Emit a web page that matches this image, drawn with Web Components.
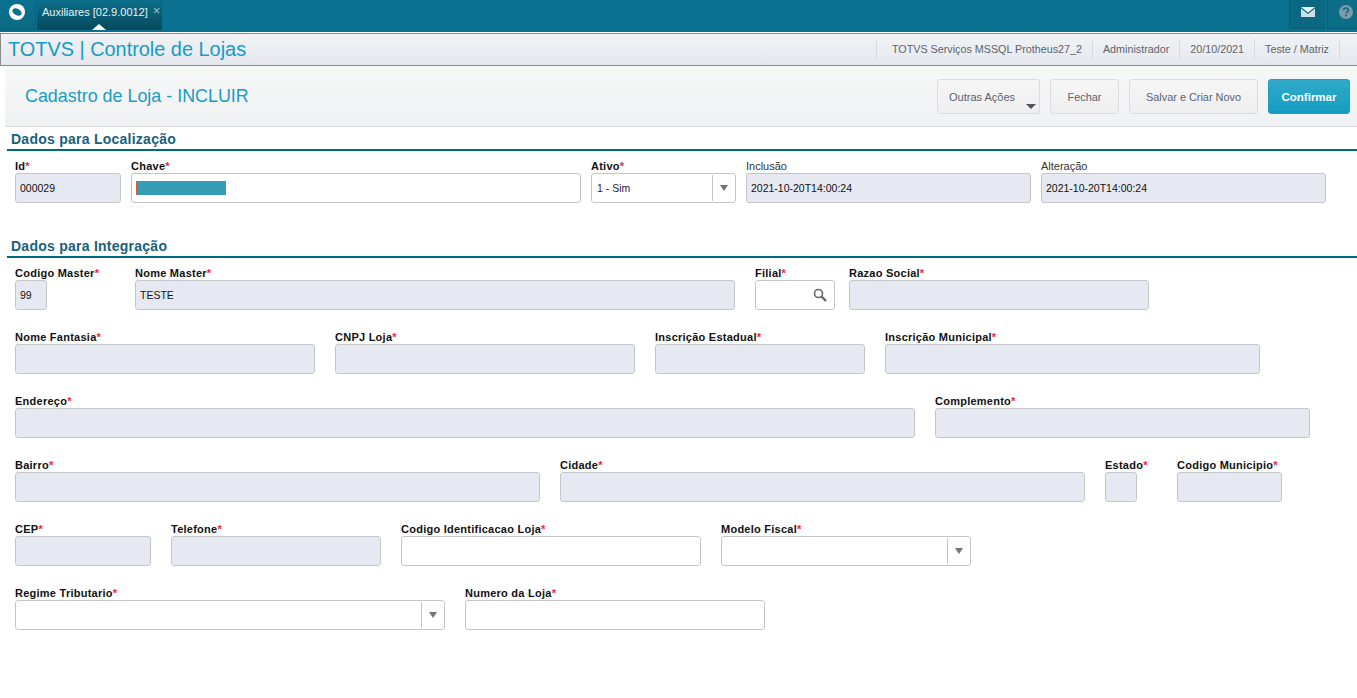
<!DOCTYPE html>
<html lang="pt-BR">
<head>
<meta charset="utf-8">
<title>TOTVS | Controle de Lojas</title>
<style>
  html, body { margin: 0; height: 100%; background: #fff; overflow: hidden; }
  body { font-family: "Liberation Sans", Arial, sans-serif; }
</style>
</head>
<body>
<app-topbar label="Auxiliares [02.9.0012]"></app-topbar>
<app-titlebar title="TOTVS | Controle de Lojas">
  <span>TOTVS Serviços MSSQL Protheus27_2</span>
  <span>Administrador</span>
  <span>20/10/2021</span>
  <span>Teste / Matriz</span>
</app-titlebar>
<page-header title="Cadastro de Loja - INCLUIR">
  <action-button width="103" menu>Outras Ações</action-button>
  <action-button width="69">Fechar</action-button>
  <action-button width="129">Salvar e Criar Novo</action-button>
  <action-button width="82" primary>Confirmar</action-button>
</page-header>

<form-section title="Dados para Localização" top="4">
  <form-row gap="10">
    <form-field label="Id" required readonly width="106" value="000029"></form-field>
    <form-field label="Chave" required width="450" masked></form-field>
    <form-field label="Ativo" required type="select" width="145" value="1 - Sim"></form-field>
    <form-field label="Inclusão" plain readonly width="285" value="2021-10-20T14:00:24"></form-field>
    <form-field label="Alteração" plain readonly width="285" value="2021-10-20T14:00:24"></form-field>
  </form-row>
</form-section>

<form-section title="Dados para Integração" top="35">
  <form-row gap="10">
    <form-field label="Codigo Master" required readonly width="110" input-width="32" value="99"></form-field>
    <form-field label="Nome Master" required readonly width="610" input-width="600" value="TESTE"></form-field>
    <form-field label="Filial" required type="search" width="84" input-width="80"></form-field>
    <form-field label="Razao Social" required readonly width="300"></form-field>
  </form-row>
  <form-row>
    <form-field label="Nome Fantasia" required readonly width="300"></form-field>
    <form-field label="CNPJ Loja" required readonly width="300"></form-field>
    <form-field label="Inscrição Estadual" required readonly width="210"></form-field>
    <form-field label="Inscrição Municipal" required readonly width="375"></form-field>
  </form-row>
  <form-row>
    <form-field label="Endereço" required readonly width="900"></form-field>
    <form-field label="Complemento" required readonly width="375"></form-field>
  </form-row>
  <form-row>
    <form-field label="Bairro" required readonly width="525"></form-field>
    <form-field label="Cidade" required readonly width="525"></form-field>
    <form-field label="Estado" required readonly width="52" input-width="32"></form-field>
    <form-field label="Codigo Municipio" required readonly width="105"></form-field>
  </form-row>
  <form-row>
    <form-field label="CEP" required readonly width="136"></form-field>
    <form-field label="Telefone" required readonly width="210"></form-field>
    <form-field label="Codigo Identificacao Loja" required width="300"></form-field>
    <form-field label="Modelo Fiscal" required type="select" width="250"></form-field>
  </form-row>
  <form-row>
    <form-field label="Regime Tributario" required type="select" width="430"></form-field>
    <form-field label="Numero da Loja" required width="300"></form-field>
  </form-row>
</form-section>

<script>
class AppTopbar extends HTMLElement {
  constructor() {
    super();
    this.attachShadow({ mode: 'open' });
  }
  connectedCallback() {
    this.shadowRoot.innerHTML = `
      <style>
        :host { display: flex; height: 32px; background: #0b7190; color: #fff; font-size: 11px; }
        .logo { width: 35px; height: 29px; display: flex; align-items: center; justify-content: center;
          background: linear-gradient(#0b7190, #0a6a82); border-right: 1px solid #0a5f78; border-bottom: 1px solid #0a5f78; }
        .logo svg { margin: -5px 1px 0 0; }
        .tab { margin-left: 1px; width: 125px; height: 30px; box-sizing: border-box; padding: 6px 0 0 5px;
          background: linear-gradient(#0b6e8b, #07495c); position: relative; white-space: nowrap; color: #e9f3f6; }
        .tab i { font-style: normal; color: #a9c5cf; font-size: 13px; line-height: 10px; margin-left: 2px; position: relative; top: -1px; }
        .tab::after { content: ''; position: absolute; left: 55px; bottom: 0; border: 7px solid transparent;
          border-top: 0; border-bottom: 6px solid #fff; }
        .right { margin-left: auto; display: flex; }
        .cell { height: 29px; box-sizing: border-box; padding-bottom: 5px; display: flex; align-items: center; justify-content: center;
          background: #0a6882; border-left: 1px solid #0a5f78; border-bottom: 1px solid #0a5f78; }
        .mail { width: 36px; margin-right: 2px; }
        .help { width: 30px; padding-left: 6px; background: #0b6d88; }
      </style>
      <div class="logo">
        <svg width="16" height="16" viewBox="0 0 16 16" aria-hidden="true">
          <circle cx="8" cy="8" r="8" fill="#fff"/>
          <ellipse cx="8" cy="8" rx="5" ry="3.200" transform="rotate(28 8 8)" fill="#0b7088"/>
        </svg>
      </div>
      <div class="tab">${this.getAttribute('label')} <i>×</i></div>
      <div class="right">
        <div class="cell mail">
          <svg width="14" height="10" viewBox="0 0 14 10" aria-hidden="true">
            <path d="M0 0H14L7 5.400Z" fill="#eef5f8"/>
            <path d="M0 1.600V10H14V1.600L7 7Z" fill="#cfe0e8"/>
          </svg>
        </div>
        <div class="cell help">
          <svg width="14" height="14" viewBox="0 0 14 14" aria-hidden="true">
            <circle cx="7" cy="7" r="7" fill="#7d9aa6"/>
            <path d="M4.600 5.300C4.700 3.800 5.700 3 7 3c1.400 0 2.400.8 2.400 2 0 1-.6 1.500-1.200 1.900-.6.4-.8.700-.8 1.400" fill="none" stroke="#0b6d88" stroke-width="1.700"/>
            <rect x="6.200" y="9.400" width="1.800" height="1.800" fill="#0b6d88"/>
          </svg>
        </div>
      </div>
    `;
  }
}

class AppTitlebar extends HTMLElement {
  constructor() {
    super();
    this.attachShadow({ mode: 'open' });
  }
  connectedCallback() {
    this.shadowRoot.innerHTML = `
      <style>
        :host { display: flex; align-items: center; box-sizing: border-box; height: 34px; border-top: 1px solid #fff;
          background: linear-gradient(#f1f3f6 0, #e4e7ec 100%);
          box-shadow: inset 0 1px 0 #8b8b8b, inset 0 -1px 0 #8b8b8b, inset 1px 0 0 #8b8b8b; padding: 1px 0 2px 8px; }
        h1 { margin: 0; font-weight: normal; font-size: 19.900px; color: #159cc6; white-space: nowrap; }
        .info { margin-left: auto; margin-right: 17px; display: flex; height: 20px; align-items: center;
          font-size: 10.750px; color: #5d6470; border-left: 1px solid #d6d9de; padding-left: 5px; }
        ::slotted(span) { padding: 0 10px; line-height: 20px; border-right: 1px solid #d6d9de; white-space: nowrap; }
      </style>
      <h1>${this.getAttribute('title')}</h1>
      <div class="info"><slot></slot></div>
    `;
  }
}

class PageHeader extends HTMLElement {
  constructor() {
    super();
    this.attachShadow({ mode: 'open' });
  }
  connectedCallback() {
    this.shadowRoot.innerHTML = `
      <style>
        :host { display: flex; align-items: center; box-sizing: border-box; height: 61px; margin-left: 5px;
          padding: 1px 7px 0 20px; background: linear-gradient(#f6f7f7, #f0f1f2); border-bottom: 1px solid #dcdcdc; }
        h2 { margin: 0; font-weight: normal; font-size: 17.900px; color: #1a9cc4; white-space: nowrap; }
        .actions { margin-left: auto; display: flex; gap: 10px; }
      </style>
      <h2>${this.getAttribute('title')}</h2>
      <div class="actions"><slot></slot></div>
    `;
  }
}

class ActionButton extends HTMLElement {
  constructor() {
    super();
    this.attachShadow({ mode: 'open' });
  }
  connectedCallback() {
    this.shadowRoot.innerHTML = `
      <style>
        :host { display: flex; align-items: center; justify-content: center; position: relative; box-sizing: border-box;
          height: 35px; width: ${this.getAttribute('width')}px; border: 1px solid #dcdcdc; border-radius: 3px;
          background: linear-gradient(#f6f6f6, #eeeeee); color: #5a6272; font-size: 10.900px; white-space: nowrap; }
        :host([primary]) { background: linear-gradient(#31aac9, #149cc0); border-color: #1b9fc2; color: #fff;
          font-weight: bold; font-size: 11.500px; }
        :host([menu]) { justify-content: flex-start; padding-left: 11px; font-size: 11px; }
        .caret { position: absolute; right: 3px; bottom: 4px; border: 5px solid transparent; border-bottom: 0;
          border-top: 5px solid #50535c; }
      </style>
      <slot></slot>
      ${this.hasAttribute('menu') ? '<span class="caret"></span>' : ''}
    `;
  }
}

class FormSection extends HTMLElement {
  constructor() {
    super();
    this.attachShadow({ mode: 'open' });
  }
  connectedCallback() {
    this.shadowRoot.innerHTML = `
      <style>
        :host { display: block; margin-top: ${this.getAttribute('top')}px; margin-left: 7px; }
        h3 { margin: 0; padding: 0 0 0 4px; height: 20px; line-height: 17px; box-sizing: border-box;
          font-size: 14px; font-weight: bold; color: #18627a; border-bottom: 2px solid #006a80;
          letter-spacing: .25px; white-space: nowrap; }
        .rows { padding: 8px 0 0 8px; display: flex; flex-direction: column; gap: 20px; }
      </style>
      <h3>${this.getAttribute('title')}</h3>
      <div class="rows"><slot></slot></div>
    `;
  }
}

class FormRow extends HTMLElement {
  constructor() {
    super();
    this.attachShadow({ mode: 'open' });
  }
  connectedCallback() {
    this.shadowRoot.innerHTML = `
      <style>
        :host { display: flex; gap: ${this.getAttribute('gap') || 20}px; }
      </style>
      <slot></slot>
    `;
  }
}

class FormField extends HTMLElement {
  constructor() {
    super();
    this.attachShadow({ mode: 'open' });
  }
  connectedCallback() {
    const width = this.getAttribute('width');
    const inputWidth = this.getAttribute('input-width') || width;
    const type = this.getAttribute('type');
    const star = this.hasAttribute('required') ? '<b>*</b>' : '';
    let extra = '';
    if (type === 'select') {
      extra = '<span class="arrow"><i></i></span>';
    }
    if (type === 'search') {
      extra = `<svg class="lens" width="14" height="14" viewBox="0 0 14 14" aria-hidden="true">
        <circle cx="5.500" cy="5.500" r="4" fill="none" stroke="#5f6a72" stroke-width="1.600"/>
        <path d="M8.500 8.500L13 13" stroke="#5f6a72" stroke-width="2.400"/>
      </svg>`;
    }
    this.shadowRoot.innerHTML = `
      <style>
        :host { display: block; width: ${width}px; flex: none; }
        label { display: block; height: 14px; line-height: 14px; font-size: 11px; font-weight: bold; color: #111;
          letter-spacing: .25px; white-space: nowrap; }
        label b { color: #f01e3c; letter-spacing: 0; }
        :host([plain]) label { font-weight: normal; color: #333; letter-spacing: 0; }
        .box { position: relative; box-sizing: border-box; width: ${inputWidth}px; height: 30px; display: flex;
          align-items: center; padding-left: 4px; border: 1px solid #c4c6c9; border-radius: 3px; background: #fff;
          font-size: 10.500px; color: #111; }
        :host([readonly]) .box { background: #e6e9f1; }
        :host([type="select"]) .box { padding-left: 5px; color: #2a1a3a; }
        .mask { width: 90px; height: 14px; background: #359cb8; border-left: 1px solid #c8603c; box-sizing: border-box; }
        .arrow { position: absolute; right: 0; top: 1px; bottom: 1px; width: 22px; border-left: 1px solid #c4c6c9;
          display: flex; align-items: center; justify-content: center; }
        .arrow i { border: 4.500px solid transparent; border-bottom: 0; border-top: 6px solid #70747e; }
        .lens { position: absolute; right: 7px; top: 7px; }
      </style>
      <label>${this.getAttribute('label')}${star}</label>
      <div class="box">${this.hasAttribute('masked') ? '<span class="mask"></span>' : ''}${this.getAttribute('value') || ''}${extra}</div>
    `;
  }
}

customElements.define('app-topbar', AppTopbar);
customElements.define('app-titlebar', AppTitlebar);
customElements.define('page-header', PageHeader);
customElements.define('action-button', ActionButton);
customElements.define('form-section', FormSection);
customElements.define('form-row', FormRow);
customElements.define('form-field', FormField);
</script>
</body>
</html>
